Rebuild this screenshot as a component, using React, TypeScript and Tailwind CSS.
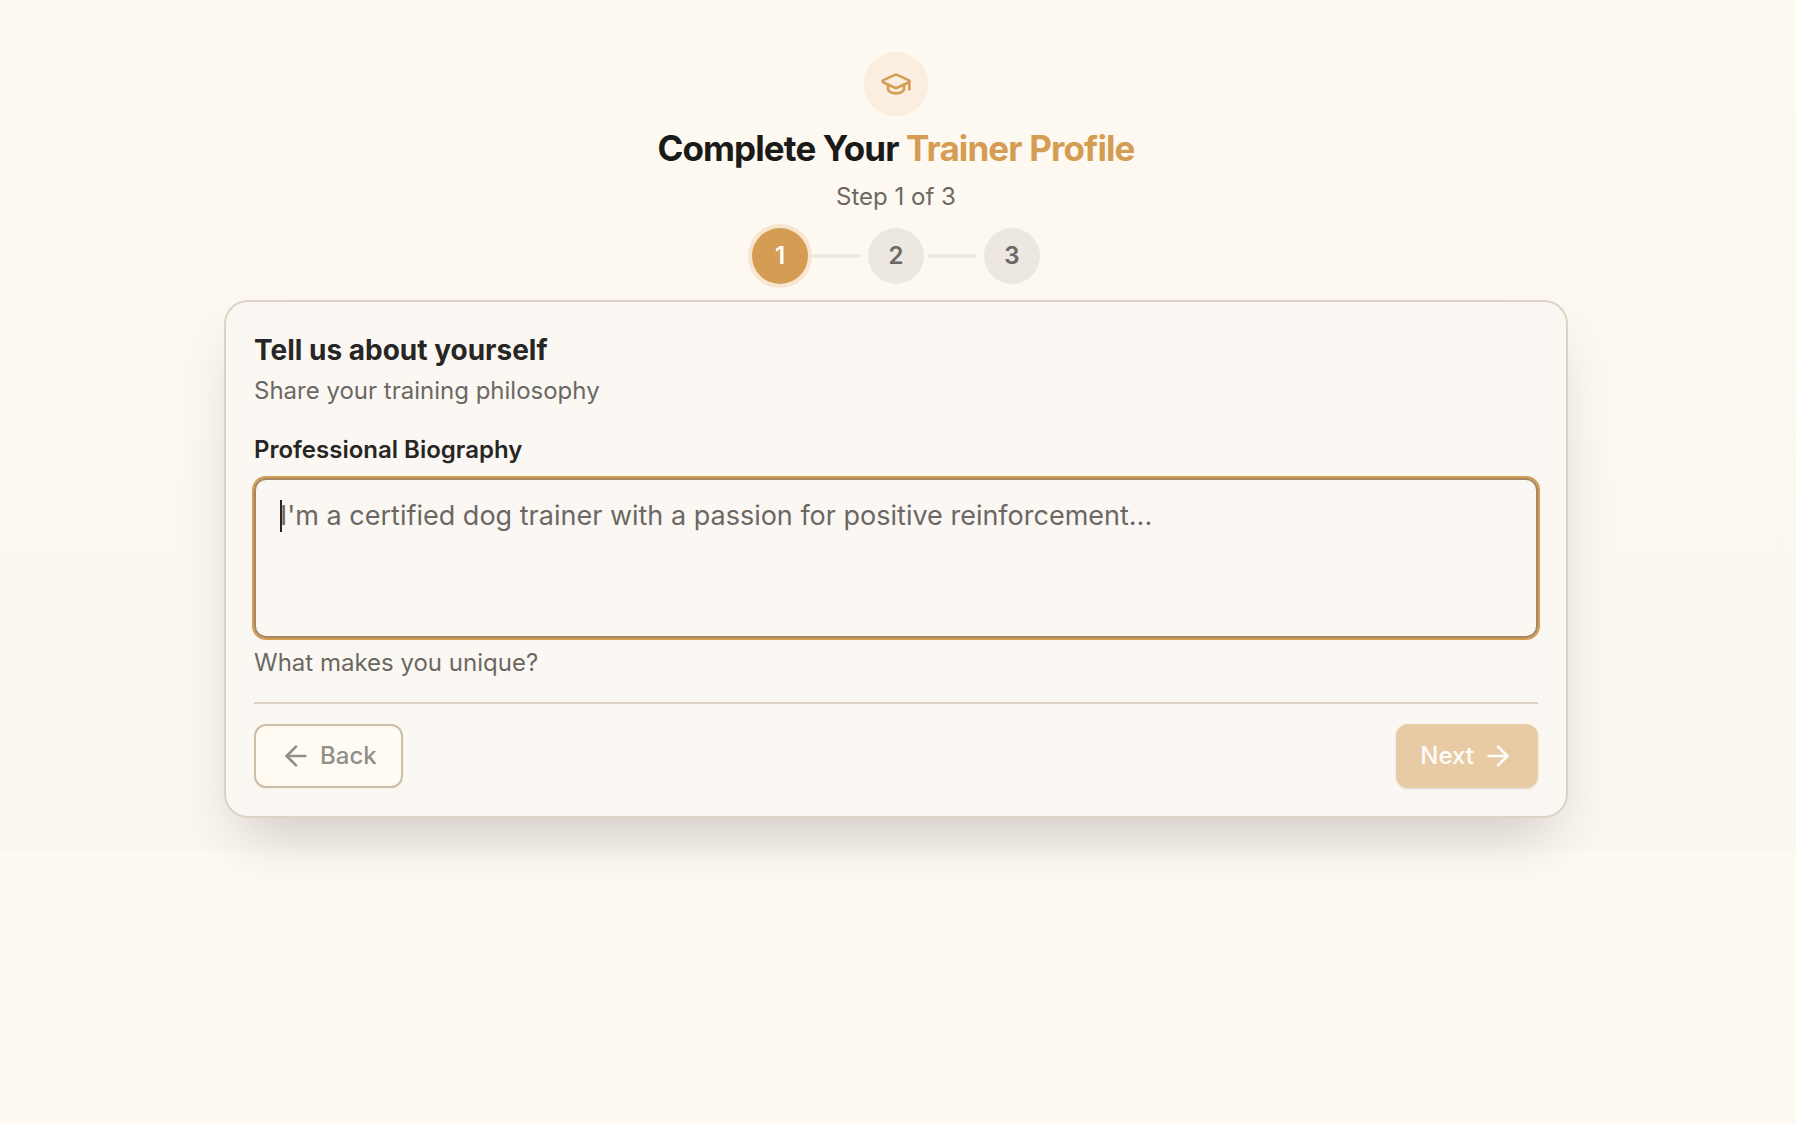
import { Fragment, useState } from "react";
import { ArrowLeft, ArrowRight, GraduationCap } from "lucide-react";

const steps = [1, 2, 3];

function StepIndicator({ current }: { current: number }) {
  return (
    <ol className="flex items-center justify-center gap-1">
      {steps.map((step) => (
        <Fragment key={step}>
          {step > 1 && <li aria-hidden="true" className="mr-1 h-1 w-12 rounded-full bg-[#ece7e1]" />}
          <li
            aria-current={step === current ? "step" : undefined}
            className={
              step === current
                ? "flex size-14 items-center justify-center rounded-full bg-[#d59d54] text-2xl font-semibold text-white ring-4 ring-[#f6e6d0]"
                : "flex size-14 items-center justify-center rounded-full bg-[#ece7e1] text-2xl font-semibold text-[#6b6863]"
            }
          >
            {step}
          </li>
        </Fragment>
      ))}
    </ol>
  );
}

export default function App() {
  const [bio, setBio] = useState("");

  return (
    <div className="min-h-screen bg-[#fef9f1] font-['Inter','Liberation_Sans',sans-serif] text-[#272624]">
      <main className="bg-linear-to-b from-[#fef9f1] to-[#fbf6ef] pt-[52px] pr-1 pb-8">
        <div className="mx-auto max-w-[1344px]">

          {/* Header */}
          <header className="mb-4 flex flex-col items-center">
            <div className="mb-2 flex size-16 items-center justify-center rounded-full bg-[#faeee0]">
              <GraduationCap className="size-8 text-[#d59d54]" />
            </div>
            <h1 className="mb-2 text-[35px] leading-12 font-bold tracking-tight text-[#1a1a19]">
              Complete Your <span className="text-[#d59d54]">Trainer Profile</span>
            </h1>
            <p className="mb-[14px] text-2xl leading-[34px] text-[#6b6863]">Step 1 of 3</p>
            <StepIndicator current={1} />
          </header>

          {/* Form card */}
          <section className="rounded-3xl border-2 border-[#dcd3c4] bg-[#fbf8f3] p-7 shadow-[0_32px_60px_-16px_rgba(0,0,0,0.18)]">
            <form onSubmit={(e) => e.preventDefault()}>
              <h2 className="text-[28px] leading-10 font-bold">Tell us about yourself</h2>
              <p className="mt-1 text-2xl leading-[34px] text-[#6b6863]">Share your training philosophy</p>

              <label htmlFor="bio" className="mt-[26px] mb-3 block text-2xl leading-8 font-semibold">
                Professional Biography
              </label>
              <div className="relative">
                <textarea
                  id="bio"
                  autoFocus
                  value={bio}
                  onChange={(e) => setBio(e.target.value)}
                  placeholder="I'm a certified dog trainer with a passion for positive reinforcement..."
                  className="peer block h-40 w-full resize-none rounded-xl border-2 border-[#a5885f] px-6 py-4 text-[27px] leading-10 ring-2 ring-[#d59d54] outline-none placeholder:text-[#6b6863] placeholder-shown:caret-transparent"
                />
                {/* Thick caret for the empty field */}
                <span
                  aria-hidden="true"
                  className="pointer-events-none absolute top-[22px] left-[26px] hidden h-8 w-0.5 bg-[#272624] peer-placeholder-shown:block"
                />
              </div>
              <p className="mt-2 text-2xl leading-[34px] text-[#6b6863]">What makes you unique?</p>

              <div className="mt-[22px] flex items-center justify-between border-t-2 border-[#dcd3c4] pt-5">
                <button
                  type="button"
                  disabled
                  className="flex h-16 items-center gap-2 rounded-xl border-2 border-[#cdbea6] bg-[#fffbf3] px-6 text-2xl font-medium text-[#90908b] shadow-xs"
                >
                  <ArrowLeft className="size-8" />
                  Back
                </button>
                <button
                  type="submit"
                  disabled
                  className="flex h-16 items-center gap-2 rounded-xl bg-[#e8cba4] px-6 text-2xl font-medium text-[#fefcfa] shadow-sm"
                >
                  Next
                  <ArrowRight className="size-8" />
                </button>
              </div>
            </form>
          </section>
        </div>
      </main>
    </div>
  );
}
